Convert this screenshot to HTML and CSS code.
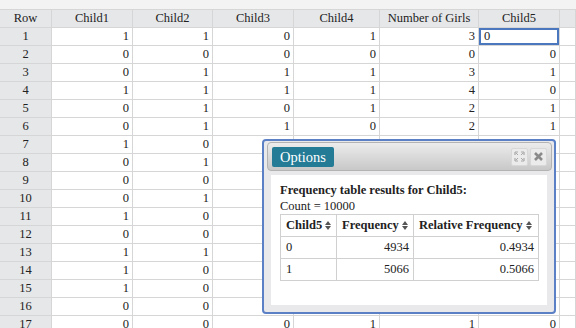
FILE: index.html
```html
<!DOCTYPE html>
<html lang="en">
<head>
    <meta charset="UTF-8">
    <title>Data Grid - Frequency Table</title>
    <link rel="stylesheet" href="styles.css">
</head>
<body>
    <div class="toolbar"></div>

    <table class="grid">
        <colgroup>
            <col class="col-row">
            <col class="col-c1">
            <col class="col-c2">
            <col class="col-c3">
            <col class="col-c4">
            <col class="col-girls">
            <col class="col-c5">
            <col class="col-rest">
        </colgroup>
        <thead>
            <tr>
                <th>Row</th>
                <th>Child1</th>
                <th>Child2</th>
                <th>Child3</th>
                <th>Child4</th>
                <th>Number of Girls</th>
                <th>Child5</th>
                <th></th>
            </tr>
        </thead>
        <tbody id="grid-body">
            <!-- rows added by script below -->
        </tbody>
    </table>

    <div class="dialog">
        <div class="dialog-titlebar">
            <span class="btn-options">Options</span>
            <div class="title-buttons">
                <span class="title-btn">
                    <svg width="11" height="11" viewBox="0 0 11 11">
                        <path d="M1 1h3M1 1v3M10 1h-3M10 1v3M1 10h3M1 10v-3M10 10h-3M10 10v-3" stroke="#a8a8a8" stroke-width="1.2" fill="none"/>
                        <path d="M2 2l2 2M9 2l-2 2M2 9l2-2M9 9l-2-2" stroke="#a8a8a8" stroke-width="1" fill="none"/>
                    </svg>
                </span>
                <span class="title-btn">
                    <svg width="11" height="11" viewBox="0 0 11 11">
                        <path d="M2 2l7 7M9 2l-7 7" stroke="#8a8a8a" stroke-width="2.6" fill="none"/>
                    </svg>
                </span>
            </div>
        </div>
        <div class="dialog-content">
            <p class="result-title">Frequency table results for Child5:</p>
            <p class="result-count">Count = 10000</p>
            <table class="freq">
                <colgroup>
                    <col class="fcol-value">
                    <col class="fcol-freq">
                    <col class="fcol-rel">
                </colgroup>
                <thead>
                    <tr>
                        <th>Child5 <svg class="sort" width="6" height="9" viewBox="0 0 6 9"><path d="M3 0L6 4H0z M0 5H6L3 9z" fill="#555"/></svg></th>
                        <th>Frequency <svg class="sort" width="6" height="9" viewBox="0 0 6 9"><path d="M3 0L6 4H0z M0 5H6L3 9z" fill="#555"/></svg></th>
                        <th>Relative Frequency <svg class="sort" width="6" height="9" viewBox="0 0 6 9"><path d="M3 0L6 4H0z M0 5H6L3 9z" fill="#555"/></svg></th>
                    </tr>
                </thead>
                <tbody>
                    <tr>
                        <td>0</td>
                        <td class="num">4934</td>
                        <td class="num">0.4934</td>
                    </tr>
                    <tr>
                        <td>1</td>
                        <td class="num">5066</td>
                        <td class="num">0.5066</td>
                    </tr>
                </tbody>
            </table>
        </div>
    </div>

    <script>
        // Child1..Child4, Number of Girls, Child5
        const rows = [
            [1, 1, 0, 1, 3, 0],
            [0, 0, 0, 0, 0, 0],
            [0, 1, 1, 1, 3, 1],
            [1, 1, 1, 1, 4, 0],
            [0, 1, 0, 1, 2, 1],
            [0, 1, 1, 0, 2, 1],
            [1, 0, 0, 1, 2, 0],
            [0, 1, 0, 0, 1, 0],
            [0, 0, 1, 1, 2, 0],
            [0, 1, 0, 1, 2, 1],
            [1, 0, 1, 0, 2, 1],
            [0, 0, 1, 1, 2, 1],
            [1, 1, 0, 0, 2, 1],
            [1, 0, 1, 1, 3, 0],
            [1, 0, 0, 1, 2, 0],
            [0, 0, 1, 0, 1, 0],
            [0, 0, 0, 1, 1, 0]
        ];

        const body = document.getElementById('grid-body');
        rows.forEach((values, i) => {
            const tr = document.createElement('tr');
            let html = `<td class="row-num">${i + 1}</td>`;
            values.forEach((v, j) => {
                const editing = i === 0 && j === 5;
                html += `<td class="${editing ? 'cell editing' : 'cell'}">${v}</td>`;
            });
            html += '<td class="cell"></td>';
            tr.innerHTML = html;
            body.appendChild(tr);
        });
    </script>
</body>
</html>
```

FILE: styles.css
```css
body {
    margin: 0;
    background: #fff;
    font-family: "Liberation Serif", "Times New Roman", serif;
    font-size: 12.5px;
    color: #222;
    overflow: hidden;
}
.toolbar {
    height: 9px;
    background: #f3f3f3;
}
.grid {
    width: 576px;
    table-layout: fixed;
    border-collapse: separate;
    border-spacing: 0;
    border-top: 1px solid #d6d6d6;
}
.col-row { width: 52px; }
.col-c1 { width: 81px; }
.col-c2 { width: 80px; }
.col-c3 { width: 81px; }
.col-c4 { width: 86px; }
.col-girls { width: 99px; }
.col-c5 { width: 81px; }
.col-rest { width: 16px; }
.grid th,
.grid td {
    height: 17px;
    padding: 0;
    line-height: 17px;
    border-right: 1px solid #d6d6d6;
    border-bottom: 1px solid #d6d6d6;
    white-space: nowrap;
    overflow: hidden;
}
.grid th {
    background: #e6e7e9;
    font-weight: normal;
    text-align: center;
}
.grid .row-num {
    background: #e6e7e9;
    text-align: center;
}
.grid .cell {
    text-align: right;
    padding-right: 3px;
}
.grid .editing {
    text-align: left;
    padding-left: 5px;
    box-shadow: inset 0 0 0 2px #4b77bf;
}

/* options dialog */
.dialog {
    position: absolute;
    left: 262px;
    top: 139px;
    width: 294px;
    height: 175px;
    box-sizing: border-box;
    padding: 1px 2px 7px 3px;
    border: 2px solid #5b80c6;
    border-radius: 4px;
    background: #e9e9eb;
    display: flex;
    flex-direction: column;
}
.dialog-titlebar {
    height: 27px;
    padding: 0 4px;
    border: 1px solid #b3b3b3;
    border-radius: 4px;
    background: linear-gradient(#ececec, #c8c8c8);
    display: flex;
    align-items: center;
    justify-content: space-between;
}
.btn-options {
    height: 20px;
    line-height: 20px;
    padding: 0 8px;
    border-radius: 2px;
    background: #237b96;
    color: #fff;
    font-size: 14.5px;
}
.title-buttons {
    display: flex;
    gap: 2px;
}
.title-btn {
    width: 17px;
    height: 18px;
    box-sizing: border-box;
    border: 1px solid #d8d8d8;
    border-radius: 2px;
    background: #ebebeb;
    display: flex;
    align-items: center;
    justify-content: center;
}
.dialog-content {
    flex: 1;
    margin: 4px 5px 0 4px;
    padding: 7px 9px 0 9px;
    background: #fff;
}
.result-title,
.result-count {
    margin: 0;
    line-height: 16px;
}
.result-title {
    font-weight: bold;
}
.freq {
    width: 258px;
    table-layout: fixed;
    border-collapse: collapse;
}
.fcol-value { width: 56px; }
.fcol-freq { width: 77px; }
.fcol-rel { width: 125px; }
.freq th,
.freq td {
    height: 21px;
    padding: 0 4px 0 5px;
    border: 1px solid #d0d0d0;
    text-align: left;
    white-space: nowrap;
}
.freq th {
    font-weight: bold;
}
.freq td.num {
    text-align: right;
}
.sort {
    vertical-align: -1px;
}
```
